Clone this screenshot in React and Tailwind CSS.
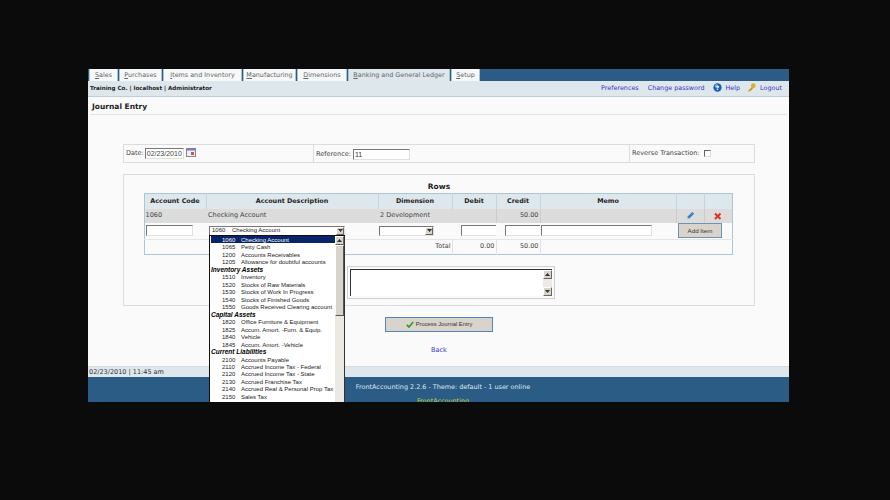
const tabs = [
  ["Sales", "w-[29px]"],
  ["Purchases", "w-[43px]"],
  ["Items and Inventory", "w-[79px]"],
  ["Manufacturing", "w-[53px]"],
  ["Dimensions", "w-[50px]"],
  ["Banking and General Ledger", "w-[102px]"],
  ["Setup", "w-[29px]"],
];

const list = [
  ["1060", "Checking Account"],
  ["1065", "Petty Cash"],
  ["1200", "Accounts Receivables"],
  ["1205", "Allowance for doubtful accounts"],
  ["Inventory Assets"],
  ["1510", "Inventory"],
  ["1520", "Stocks of Raw Materials"],
  ["1530", "Stocks of Work In Progress"],
  ["1540", "Stocks of Finished Goods"],
  ["1550", "Goods Received Clearing account"],
  ["Capital Assets"],
  ["1820", "Office Furniture & Equipment"],
  ["1825", "Accum. Amort. -Furn. & Equip."],
  ["1840", "Vehicle"],
  ["1845", "Accum. Amort. -Vehicle"],
  ["Current Liabilities"],
  ["2100", "Accounts Payable"],
  ["2110", "Accrued Income Tax - Federal"],
  ["2120", "Accrued Income Tax - State"],
  ["2130", "Accrued Franchise Tax"],
  ["2140", "Accrued Real & Personal Prop Tax"],
  ["2150", "Sales Tax"],
  ["2160", "Accrued Use Tax Payable"],
];

const Arrow = ({ up }) => (
  <svg width="5" height="3" viewBox="0 0 5 3">
    <path d={up ? "M0 3L2.5 0L5 3Z" : "M0 0L5 0L2.5 3Z"} fill="#333" />
  </svg>
);

const SmallBtn = ({ up, className = "" }) => (
  <div className={"flex items-center justify-center bg-[#d8d4cc] border border-t-white border-l-white border-b-[#666] border-r-[#666] " + className}>
    <Arrow up={up} />
  </div>
);

const Input = ({ className = "", children }) => (
  <div className={"h-[11px] bg-white border border-t-[#777] border-l-[#777] border-b-[#e4e0d8] border-r-[#e4e0d8] text-[7px] leading-[9px] pl-[1px] font-['Liberation_Sans',sans-serif] text-[#333] " + className}>
    {children}
  </div>
);

const th = "border-r border-[#c3d5df] font-bold text-center text-[6.4px] text-[#222] pt-[1px]";

export default function App() {
  return (
    <div className="w-[890px] h-[500px] bg-[#0b0b0b] overflow-hidden pt-[69px] pl-[88px] font-['DejaVu_Sans',sans-serif] text-[6.5px] text-[#444]">
      <div className="relative w-[701px] h-[333px] overflow-hidden flex flex-col bg-[#fafafa]">
        <div className="h-[12px] shrink-0 bg-[#2a5c86] flex gap-[1px] pl-[1px]">
          {tabs.map(([t, w]) => (
            <div key={t} className={w + " h-[12px] border-x border-[#a9c3d1] text-center text-[6.4px] leading-[12px] text-[#666] whitespace-nowrap " + (t.startsWith("Banking") ? "bg-[#dee7ec]" : "bg-[#f6f8f9]")}>
              <span className="underline decoration-[0.5px]">{t[0]}</span>{t.slice(1)}
            </div>
          ))}
        </div>

        <div className="h-[16px] shrink-0 bg-[#dee7ec] border-b border-[#bdd0da] flex items-center justify-between pl-[2px] pr-[7px]">
          <span className="font-bold text-[5.6px] text-[#222]">Training Co. | localhost | Administrator</span>
          <div className="flex items-center text-[#3636c4] text-[6.4px]">
            <span>Preferences</span>
            <span className="ml-[9px]">Change password</span>
            <svg className="ml-[8px] mb-[2px]" width="9" height="9" viewBox="0 0 10 10">
              <circle cx="5" cy="5" r="4.6" fill="#1a5fb4" />
              <circle cx="4" cy="3.5" r="2" fill="#6fa8e8" />
              <text x="5" y="7.5" fontSize="6.5" fill="#fff" textAnchor="middle" fontWeight="700">?</text>
            </svg>
            <span className="ml-[4px]">Help</span>
            <svg className="ml-[7px] mb-[2px]" width="9" height="9" viewBox="0 0 10 10">
              <circle cx="7" cy="3" r="2.6" fill="#e0b030" />
              <path d="M5.5 4.5L1 9L2.5 9.6L3.5 8.5L4.5 8.5L7 5.5Z" fill="#c99a20" />
            </svg>
            <span className="ml-[4px]">Logout</span>
          </div>
        </div>

        <div className="flex-1 min-h-0 flex flex-col px-[2px]">
          <div className="h-[18px] shrink-0 border-b border-[#dde5ea] pl-[2px] pt-[5px] font-bold text-[7.5px] leading-[10px] text-[#222]">
            Journal Entry
          </div>

          <div className="ml-[33px] mt-[29px] w-[632px] h-[19px] shrink-0 flex border border-[#dcdcdc] bg-[#fafafa]">
            <div className="w-[190px] border-r border-[#dcdcdc] flex items-center pl-[2px]">
              <span>Date:</span>
              <Input className="ml-[1px] w-[39px] text-[#444]">02/23/2010</Input>
              <svg className="ml-[2px] mb-[2px]" width="10" height="9" viewBox="0 0 10 9">
                <rect x="0.5" y="0.5" width="9" height="8" fill="#eef" stroke="#888" />
                <rect x="0.5" y="0.5" width="9" height="2" fill="#7a7ac0" />
                <rect x="5" y="4" width="3" height="3" fill="#c55" />
              </svg>
            </div>
            <div className="w-[316px] border-r border-[#dcdcdc] flex items-center pl-[2px] pt-[2px]">
              <span>Reference:</span>
              <Input className="ml-[2px] w-[57px] h-[10px]">11</Input>
            </div>
            <div className="flex items-center pl-[2px] flex-1">
              <span>Reverse Transaction:</span>
              <div className="ml-[4px] w-[7px] h-[7px] bg-white border border-t-[#666] border-l-[#666] border-b-[#ddd] border-r-[#ddd]" />
            </div>
          </div>

          <div className="ml-[33px] mt-[11px] w-[632px] h-[132px] shrink-0 border border-[#dcdcdc] flex flex-col items-center relative">
            <div className="mt-[6px] h-[12px] font-bold text-[7.5px] leading-[11px] text-[#222]">Rows</div>
            <table className="ml-[-2px] w-[588px] table-fixed border-collapse border border-[#a9c7d6] text-[6.5px]">
              <colgroup>
                <col className="w-[62px]" />
                <col className="w-[172px]" />
                <col className="w-[74px]" />
                <col className="w-[44px]" />
                <col className="w-[44px]" />
                <col className="w-[136px]" />
                <col className="w-[28px]" />
                <col className="w-[28px]" />
              </colgroup>
              <tbody>
                <tr className="h-[15px] bg-[#dee7ec]">
                  <td className={th}>Account Code</td>
                  <td className={th}>Account Description</td>
                  <td className={th}>Dimension</td>
                  <td className={th}>Debit</td>
                  <td className={th}>Credit</td>
                  <td className={th}>Memo</td>
                  <td className={th}></td>
                  <td className="p-0"></td>
                </tr>
                <tr className="h-[14px] bg-[#dcdcdc]">
                  <td className="pl-[1px]">1060</td>
                  <td className="pl-[2px]">Checking Account</td>
                  <td className="pl-[2px]">2 Development</td>
                  <td className="border-r border-[#ccc]"></td>
                  <td className="text-right pr-[1px] border-r border-[#ccc]">50.00</td>
                  <td className="border-r border-[#ccc]"></td>
                  <td className="border-r border-[#ccc]">
                    <svg className="mx-auto" width="9" height="9" viewBox="0 0 10 10">
                      <path d="M7 1L9 3L3.5 8.5L1 9L1.5 6.5Z" fill="#3b7fc4" />
                      <path d="M7 1L9 3L8 4L6 2Z" fill="#5a9be0" />
                      <path d="M1.5 6.5L3.5 8.5L1 9Z" fill="#e8c9a0" />
                    </svg>
                  </td>
                  <td>
                    <svg className="mx-auto" width="8" height="8" viewBox="0 0 8 8">
                      <path d="M1 1.5L6.5 7M6.5 1.5L1 7" stroke="#e0301e" strokeWidth="2" />
                    </svg>
                  </td>
                </tr>
                <tr className="h-[17px] bg-[#fafafa]">
                  <td className="pl-[1px]"><Input className="w-[47px] h-[11px]" /></td>
                  <td className="pl-[3px]">
                    <div className="w-[136px] h-[10px] bg-white border border-t-[#777] border-l-[#777] border-b-[#e4e0d8] border-r-[#e4e0d8] flex items-center justify-between text-[#222] font-['Liberation_Sans',sans-serif] text-[6px] pl-[2px]">
                      <span className="whitespace-pre">1060    Checking Account</span>
                      <SmallBtn className="w-[8px] h-[8px]" />
                    </div>
                  </td>
                  <td className="pl-[1px]">
                    <div className="w-[55px] h-[10px] bg-white border border-t-[#777] border-l-[#777] border-b-[#e4e0d8] border-r-[#e4e0d8] flex items-center justify-end">
                      <SmallBtn className="w-[8px] h-[8px]" />
                    </div>
                  </td>
                  <td className="pl-[9px]"><Input className="w-[35px] h-[11px] border-r-0" /></td>
                  <td className="pl-[9px]"><Input className="w-[35px] h-[11px] border-r-0" /></td>
                  <td className="pl-[1px]"><Input className="w-[111px] h-[11px]" /></td>
                  <td colSpan={2} className="pl-[2px]">
                    <div className="w-[44px] h-[15px] bg-[#d8d4cc] border border-[#6d93b5] text-center text-[6.2px] leading-[13px] text-[#333] font-['Liberation_Sans',sans-serif]">Add Item</div>
                  </td>
                </tr>
                <tr className="h-[15px] bg-[#fafafa] border-t border-[#e6e6e6]">
                  <td colSpan={3} className="text-right pr-[1px] border-r border-[#dde5ea]">Total</td>
                  <td className="text-right pr-[1px] border-r border-[#dde5ea]">0.00</td>
                  <td className="text-right pr-[1px] border-r border-[#dde5ea]">50.00</td>
                  <td colSpan={3}></td>
                </tr>
              </tbody>
            </table>

            <div className="mt-[11px] ml-[30px] w-[208px] h-[33px] self-start translate-x-[193px] border border-[#cfcfcf] p-[2px]">
              <div className="relative h-full bg-white border-t border-l border-[#333] flex justify-end">
                <div className="w-[9px] h-full bg-[#ecebe6] flex flex-col justify-between">
                  <SmallBtn up className="w-[9px] h-[9px]" />
                  <SmallBtn className="w-[9px] h-[9px]" />
                </div>
              </div>
            </div>
          </div>

          <div className="ml-[295px] mt-[11px] w-[108px] h-[15px] shrink-0 bg-[#d8d4cc] border border-[#4f86bb] flex items-center justify-center gap-[2px] font-['Liberation_Sans',sans-serif] text-[5.8px] text-[#333]">
            <svg width="8" height="7" viewBox="0 0 8 7">
              <path d="M0.8 4L3 6L7.2 1" stroke="#3c9a2a" strokeWidth="1.7" fill="none" />
            </svg>
            Process Journal Entry
          </div>
          <div className="mt-[13px] h-[10px] shrink-0 ml-[341px] text-[#3636c4] text-[6.5px] leading-[10px]">Back</div>
        </div>

        <div className="h-[11px] shrink-0 bg-[#dee7ec] border-t border-[#cfdde5] text-[6.5px] leading-[10px] pl-[1px] text-[#333]">02/23/2010 | 11:45 am</div>
        <div className="h-[25px] shrink-0 bg-[#2a5c86] text-center text-[#dfe8ee] text-[6.45px] pl-[9px]">
          <div className="pt-[5px] leading-[10px] whitespace-nowrap">FrontAccounting 2.2.6 - Theme: default - 1 user online</div>
          <div className="mt-[5px] leading-[9px] text-[#b7d23c]">FrontAccounting</div>
        </div>

        <div className="absolute left-[121px] top-[166px] w-[136px] h-[170px] bg-white border-l border-t border-[#111] flex font-['Liberation_Sans',sans-serif] text-[6px] text-[#222]">
          <div className="flex-1 min-w-0 pl-[1px]">
            {list.map((r, i) =>
              r.length === 1 ? (
                <div key={i} className="h-[7.47px] leading-[8.5px] text-[6.5px] font-bold italic text-black whitespace-nowrap">{r[0]}</div>
              ) : (
                <div key={i} className={"h-[7.47px] leading-[8.5px] flex whitespace-nowrap " + (i === 0 ? "bg-[#0a246a] text-white" : "")}>
                  <span className="w-[30px] pl-[11px] shrink-0">{r[0]}</span>
                  <span>{r[1]}</span>
                </div>
              )
            )}
          </div>
          <div className="w-[10px] shrink-0 bg-[#ece9e2] border-r border-[#333] flex flex-col">
            <SmallBtn up className="w-[9px] h-[9px]" />
            <div className="w-[9px] h-[71px] bg-[#d8d4cc] border border-t-white border-l-white border-b-[#555] border-r-[#555]" />
          </div>
        </div>
      </div>
    </div>
  );
}
